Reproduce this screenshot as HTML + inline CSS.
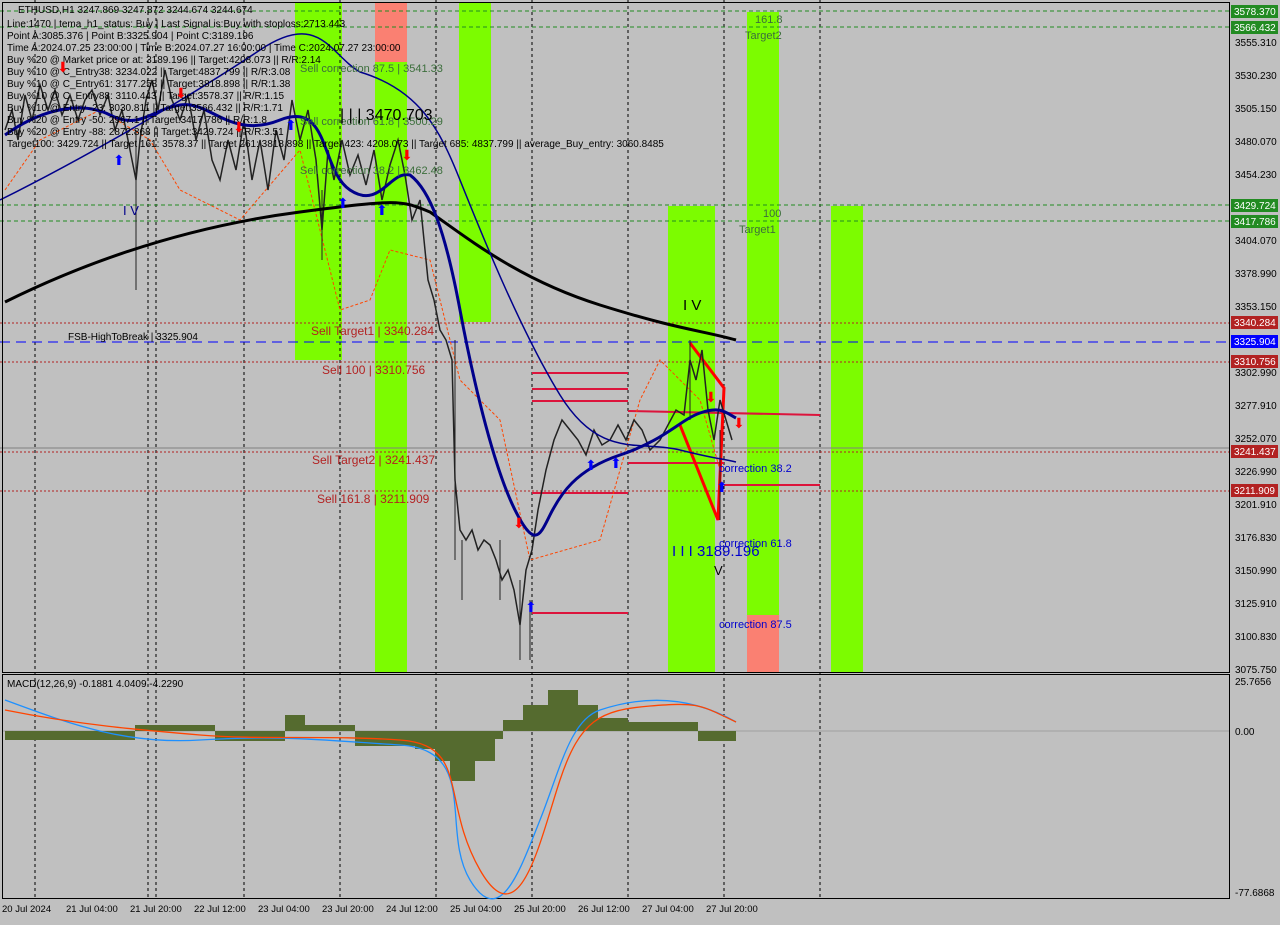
<!DOCTYPE html>
<html><head><meta charset="utf-8"><style>
body{margin:0;background:#c0c0c0;width:1280px;height:920px;overflow:hidden;font-family:"Liberation Sans",sans-serif}
svg text{font-family:"Liberation Sans",sans-serif}
</style></head><body>
<svg width="1280" height="920" xmlns="http://www.w3.org/2000/svg">
<rect width="1280" height="920" fill="#c0c0c0"/>
<g>
<rect x="295" y="3" width="47" height="357" fill="#7cfc00"/>
<rect x="375" y="3" width="32" height="59" fill="#fa8072"/>
<rect x="375" y="62" width="32" height="610" fill="#7cfc00"/>
<rect x="459" y="3" width="32" height="319" fill="#7cfc00"/>
<rect x="668" y="206" width="47" height="466" fill="#7cfc00"/>
<rect x="747" y="12" width="32" height="603" fill="#7cfc00"/>
<rect x="747" y="615" width="32" height="57" fill="#fa8072"/>
<rect x="831" y="206" width="32" height="466" fill="#7cfc00"/>
</g>
<g stroke="#000" stroke-dasharray="3,3" stroke-width="1">
<line x1="35" y1="0" x2="35" y2="898"/><line x1="148" y1="0" x2="148" y2="898"/><line x1="156" y1="0" x2="156" y2="898"/>
<line x1="244" y1="0" x2="244" y2="898"/><line x1="340" y1="0" x2="340" y2="898"/><line x1="436" y1="0" x2="436" y2="898"/>
<line x1="532" y1="0" x2="532" y2="898"/><line x1="628" y1="0" x2="628" y2="898"/><line x1="724" y1="0" x2="724" y2="898"/>
<line x1="820" y1="0" x2="820" y2="898"/>
</g>
<g stroke="#228b22" stroke-dasharray="4,3">
<line x1="0" y1="11" x2="1229" y2="11"/><line x1="0" y1="27" x2="1229" y2="27"/>
<line x1="0" y1="205" x2="1229" y2="205"/><line x1="0" y1="221" x2="1229" y2="221"/>
</g>
<g stroke="#b22222" stroke-dasharray="2,2">
<line x1="0" y1="323" x2="1229" y2="323"/><line x1="0" y1="362" x2="1229" y2="362"/>
<line x1="0" y1="452" x2="1229" y2="452"/><line x1="0" y1="491" x2="1229" y2="491"/>
</g>
<line x1="0" y1="342" x2="1229" y2="342" stroke="#0000ff" stroke-dasharray="10,6"/>
<line x1="0" y1="448" x2="1229" y2="448" stroke="#808080"/>
<g stroke="#dc143c" stroke-width="2">
<line x1="532" y1="373" x2="628" y2="373"/><line x1="532" y1="389" x2="628" y2="389"/><line x1="532" y1="401" x2="628" y2="401"/>
<line x1="532" y1="493" x2="628" y2="493"/><line x1="532" y1="613" x2="628" y2="613"/>
<line x1="628" y1="411" x2="820" y2="415"/><line x1="628" y1="463" x2="724" y2="463"/><line x1="724" y1="485" x2="820" y2="485"/>
</g>
<polyline points="690,343 724,388 718,520 680,425" fill="none" stroke="#ff0000" stroke-width="3"/>
<polyline fill="none" stroke="#ff4500" stroke-width="1" stroke-dasharray="3,2" points="5,190 40,140 100,110 150,140 180,190 240,220 300,150 340,310 370,300 390,250 430,260 460,380 500,420 530,560 600,540 640,400 660,360 700,400 720,470"/>
<!-- candles approximation -->
<polyline fill="none" stroke="#222" stroke-width="1.5" points="5,130 12,110 18,140 25,95 32,120 40,85 48,110 55,90 62,115 70,95 78,120 85,100 92,90 100,115 108,95 115,130 122,110 130,150 136,180 140,140 146,100 152,80 158,110 165,70 172,100 180,120 188,95 196,140 204,110 212,160 220,180 228,140 236,170 244,120 252,180 260,140 268,190 276,130 284,160 292,100 300,140 308,110 316,160 322,230 328,150 334,180 342,140 350,175 358,155 366,185 374,150 382,200 390,165 398,140 405,175 412,220 420,200 428,280 434,300 440,330 446,340 452,360 455,480 460,530 466,540 472,530 478,550 484,540 490,545 496,560 502,580 508,570 514,590 520,625 526,570 532,550 538,510 546,470 554,440 562,420 570,430 578,440 586,455 594,430 602,445 610,440 618,425 626,440 634,420 642,430 650,450 660,440 668,425 676,410 684,415 690,360 696,380 702,350 708,410 714,440 720,400 726,420 732,440"/>
<g stroke="#222" stroke-width="1">
<line x1="136" y1="130" x2="136" y2="290"/><line x1="322" y1="190" x2="322" y2="260"/><line x1="455" y1="340" x2="455" y2="560"/><line x1="462" y1="540" x2="462" y2="600"/><line x1="500" y1="540" x2="500" y2="600"/><line x1="520" y1="580" x2="520" y2="660"/><line x1="530" y1="600" x2="530" y2="660"/><line x1="690" y1="340" x2="690" y2="420"/><line x1="720" y1="430" x2="720" y2="520"/>
</g>
<path d="M5,302 C100,255 200,225 300,212 S400,200 430,212 C470,240 520,280 600,305 S700,330 736,340" fill="none" stroke="#000" stroke-width="3"/>
<path d="M0,200 C100,150 200,90 260,50 S330,55 360,72 C420,90 440,130 460,180 S520,330 560,395 S640,440 680,450 S720,458 736,462" fill="none" stroke="#00008b" stroke-width="1.5"/>
<path d="M5,135 C40,110 80,100 110,115 S150,110 180,105 S230,140 280,120 S320,170 350,190 S390,170 410,175 C430,190 445,230 460,310 C475,390 495,470 515,510 S540,535 550,515 S575,470 620,455 S680,420 700,413 S725,412 736,418" fill="none" stroke="#00008b" stroke-width="3"/>
<g font-size="10" fill="#000">
<text x="18" y="13">ETHUSD,H1  3247.869 3247.872 3244.674 3244.674</text>
<text x="7" y="27">Line:1470 | tema_h1_status: Buy | Last Signal is:Buy with stoploss:2713.443</text>
<text x="7" y="39">Point A:3085.376 | Point B:3325.904 | Point C:3189.196</text>
<text x="7" y="51">Time A:2024.07.25 23:00:00 | Time B:2024.07.27 16:00:00 | Time C:2024.07.27 23:00:00</text>
<text x="7" y="63">Buy %20 @ Market price or at: 3189.196 || Target:4208.073 || R/R:2.14</text>
<text x="7" y="75">Buy %10 @ C_Entry38: 3234.022 || Target:4837.799 || R/R:3.08</text>
<text x="7" y="87">Buy %10 @ C_Entry61: 3177.258 || Target:3818.898 || R/R:1.38</text>
<text x="7" y="99">Buy %10 @ C_Entry88: 3110.443 || Target:3578.37 || R/R:1.15</text>
<text x="7" y="111">Buy %10 @ Entry -23: 3030.811 || Target:3566.432 || R/R:1.71</text>
<text x="7" y="123">Buy %20 @ Entry -50: 2967.1 || Target:3417.786 || R/R:1.8</text>
<text x="7" y="135">Buy %20 @ Entry -88: 2872.868 || Target:3429.724 || R/R:3.51</text>
<text x="7" y="147">Target100: 3429.724 || Target 161: 3578.37 || Target 261: 3818.898 || Target 423: 4208.073 || Target 685: 4837.799 || average_Buy_entry: 3060.8485</text>
<text x="68" y="340">FSB-HighToBreak | 3325.904</text>
</g>
<g font-size="12" fill="#b22222">
<text x="311" y="335">Sell Target1 | 3340.284</text>
<text x="322" y="374">Sell 100 | 3310.756</text>
<text x="312" y="464">Sell Target2 | 3241.437</text>
<text x="317" y="503">Sell 161.8 | 3211.909</text>
</g>
<g font-size="11" fill="#3c6e3c">
<text x="300" y="72">Sell correction 87.5 | 3541.33</text>
<text x="300" y="125">Sell correction 61.8 | 3500.29</text>
<text x="300" y="174">Sell correction 38.2 | 3462.48</text>
<text x="755" y="23">161.8</text><text x="745" y="39">Target2</text>
<text x="763" y="217">100</text><text x="739" y="233">Target1</text>
</g>
<text x="340" y="120" font-size="16" fill="#000">| | | 3470.703</text>
<text x="672" y="556" font-size="15" fill="#0000cd">I I I 3189.196</text>
<text x="683" y="310" font-size="15" fill="#000">I V</text>
<text x="123" y="215" font-size="13" fill="#00008b">I V</text>
<text x="714" y="575" font-size="13" fill="#000">V</text>
<g font-size="11" fill="#0000cd">
<text x="719" y="472">correction 38.2</text><text x="719" y="547">correction 61.8</text><text x="719" y="628">correction 87.5</text>
</g>
<g fill="#ff0000" font-size="14"><text x="513" y="528">⬇</text><text x="733" y="428">⬇</text><text x="705" y="402">⬇</text><text x="401" y="160">⬇</text><text x="175" y="98">⬇</text><text x="57" y="72">⬇</text><text x="233" y="132">⬇</text></g>
<g fill="#0000ff" font-size="14"><text x="525" y="612">⬆</text><text x="585" y="470">⬆</text><text x="610" y="468">⬆</text><text x="716" y="492">⬆</text><text x="337" y="208">⬆</text><text x="376" y="215">⬆</text><text x="285" y="130">⬆</text><text x="113" y="165">⬆</text></g>
<rect x="2.5" y="2.5" width="1227" height="670" fill="none" stroke="#000"/>
<rect x="2.5" y="674.5" width="1227" height="224" fill="none" stroke="#000"/>
<line x1="3" y1="731" x2="1229" y2="731" stroke="#808080" stroke-width=".5"/>
<g fill="#556b2f">
<rect x="5" y="731" width="130" height="9"/><rect x="135" y="725" width="80" height="6"/><rect x="215" y="731" width="70" height="10"/>
<rect x="285" y="715" width="20" height="16"/><rect x="305" y="725" width="50" height="6"/><rect x="355" y="731" width="60" height="15"/>
<rect x="415" y="731" width="20" height="18"/><rect x="435" y="731" width="15" height="30"/><rect x="450" y="731" width="25" height="50"/>
<rect x="475" y="731" width="20" height="30"/><rect x="495" y="731" width="8" height="8"/><rect x="503" y="720" width="20" height="11"/>
<rect x="523" y="705" width="25" height="26"/><rect x="548" y="690" width="30" height="41"/><rect x="578" y="705" width="20" height="26"/>
<rect x="598" y="718" width="30" height="13"/><rect x="628" y="722" width="70" height="9"/><rect x="698" y="731" width="38" height="10"/>
</g>
<path d="M5,700 C60,720 120,745 200,740 S320,740 400,745 S440,830 470,880 S520,870 540,820 S570,720 600,710 S680,690 736,722" fill="none" stroke="#1e90ff" stroke-width="1.3"/>
<path d="M5,710 C80,725 140,730 200,735 S330,735 400,740 S440,800 480,870 S540,840 560,780 S600,710 650,706 S700,705 736,722" fill="none" stroke="#ff4500" stroke-width="1.3"/>
<text x="7" y="687" font-size="10">MACD(12,26,9) -0.1881 4.0409 -4.2290</text>
<g font-size="10" fill="#000">
<text x="1235" y="46">3555.310</text><text x="1235" y="79">3530.230</text><text x="1235" y="112">3505.150</text>
<text x="1235" y="145">3480.070</text><text x="1235" y="178">3454.230</text><text x="1235" y="244">3404.070</text>
<text x="1235" y="277">3378.990</text><text x="1235" y="310">3353.150</text><text x="1235" y="376">3302.990</text>
<text x="1235" y="409">3277.910</text><text x="1235" y="442">3252.070</text><text x="1235" y="475">3226.990</text>
<text x="1235" y="508">3201.910</text><text x="1235" y="541">3176.830</text><text x="1235" y="574">3150.990</text>
<text x="1235" y="607">3125.910</text><text x="1235" y="640">3100.830</text><text x="1235" y="673">3075.750</text>
<text x="1235" y="685">25.7656</text><text x="1235" y="735">0.00</text><text x="1235" y="896">-77.6868</text>
</g>
<g font-size="10" fill="#fff">
<rect x="1231" y="5" width="47" height="13" fill="#228b22"/><text x="1234" y="15">3578.370</text>
<rect x="1231" y="21" width="47" height="13" fill="#228b22"/><text x="1234" y="31">3566.432</text>
<rect x="1231" y="199" width="47" height="13" fill="#228b22"/><text x="1234" y="209">3429.724</text>
<rect x="1231" y="215" width="47" height="13" fill="#228b22"/><text x="1234" y="225">3417.786</text>
<rect x="1231" y="316" width="47" height="13" fill="#b22222"/><text x="1234" y="326">3340.284</text>
<rect x="1231" y="335" width="47" height="13" fill="#0000ff"/><text x="1234" y="345">3325.904</text>
<rect x="1231" y="355" width="47" height="13" fill="#b22222"/><text x="1234" y="365">3310.756</text>
<rect x="1231" y="445" width="47" height="13" fill="#b22222"/><text x="1234" y="455">3241.437</text>
<rect x="1231" y="484" width="47" height="13" fill="#b22222"/><text x="1234" y="494">3211.909</text>
</g>
<g font-size="9.5" fill="#000">
<text x="2" y="912">20 Jul 2024</text><text x="66" y="912">21 Jul 04:00</text><text x="130" y="912">21 Jul 20:00</text>
<text x="194" y="912">22 Jul 12:00</text><text x="258" y="912">23 Jul 04:00</text><text x="322" y="912">23 Jul 20:00</text>
<text x="386" y="912">24 Jul 12:00</text><text x="450" y="912">25 Jul 04:00</text><text x="514" y="912">25 Jul 20:00</text>
<text x="578" y="912">26 Jul 12:00</text><text x="642" y="912">27 Jul 04:00</text><text x="706" y="912">27 Jul 20:00</text>
</g>
</svg>
</body></html>
